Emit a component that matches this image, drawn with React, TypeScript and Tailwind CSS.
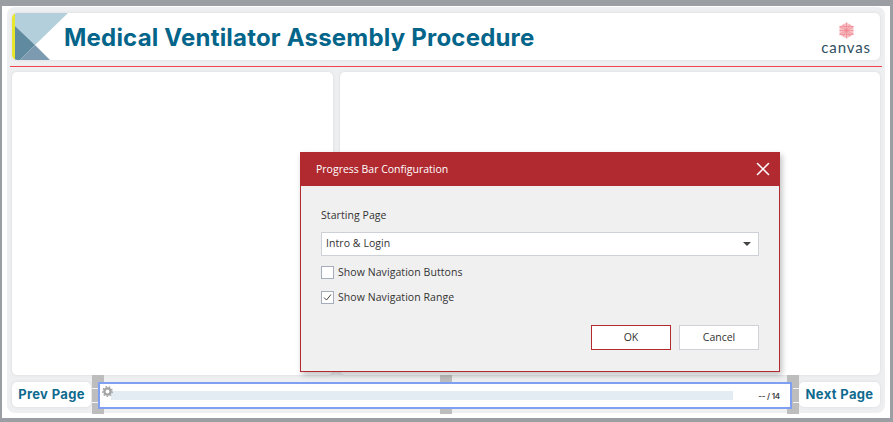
import { X } from "lucide-react";

function Logo() {
  return (
    <div className="flex flex-col items-center pr-[9px] pt-[9px]">
      <svg width="17" height="17" viewBox="0 0 17 17" className="ml-[1px]">
        <path d="M8.5 0.5 L15.5 4.5 V12.5 L8.5 16.5 L1.5 12.5 V4.5 Z" fill="#f7c0c5" />
        <path
          d="M8.5 0.5 V16.5 M1.5 4.5 L15.5 12.5 M15.5 4.5 L1.5 12.5 M5 2.5 L12 14.5 M12 2.5 L5 14.5 M1.5 8.5 H15.5 M1.5 4.5 H15.5 M1.5 12.5 H15.5"
          stroke="#ee7f8a"
          strokeWidth="0.6"
          fill="none"
        />
      </svg>
      <span className="mt-[1px] font-['Lato',sans-serif] text-[15px] leading-[15px] tracking-[0.9px] text-[#2f4f5f]">
        canvas
      </span>
    </div>
  );
}

function Banner() {
  return (
    <svg width="53" height="47" viewBox="0 0 53 47" className="absolute left-[3px] top-0">
      <path d="M0 0 H53 L20 32 L0 13 Z" fill="#b3cfdb" />
      <path d="M0 13 L20 32 L5 47 H0 Z" fill="#5f8aa0" />
      <path d="M20 32 L35 47 H5 Z" fill="#7d9bb0" />
    </svg>
  );
}

function Handle({ className }: { className: string }) {
  return <div className={`absolute bg-[#bdbdbd] ${className}`} />;
}

function Stub({ className }: { className: string }) {
  return <div className={`absolute h-[1px] w-[6px] bg-[#f4f4f5] ${className}`} />;
}

function NavButton({ label, width }: { label: string; width: string }) {
  return (
    <div
      className={`flex h-[25px] shrink-0 items-center justify-center rounded-[5px] bg-white text-[13px] font-bold tracking-[0.35px] text-[#0f6a8f] shadow-[0_0_3px_#d8d9dc] ${width}`}
    >
      {label}
    </div>
  );
}

function Check({ checked, label }: { checked?: boolean; label: string }) {
  return (
    <div className="flex h-[13px] items-center gap-[4px]">
      <div className="flex h-[13px] w-[13px] items-center justify-center border border-[#a5adbc] bg-white">
        {checked && (
          <svg width="9" height="9" viewBox="0 0 9 9">
            <path d="M1 4.5 L3.5 7 L8 1.5" stroke="#444444" strokeWidth="1" fill="none" />
          </svg>
        )}
      </div>
      <span className="tracking-[0.07px]">{label}</span>
    </div>
  );
}

function Dialog() {
  return (
    <div className="absolute left-[300px] top-[152px] z-10 flex h-[220px] w-[480px] flex-col border border-t-0 border-[#b02a30] bg-[#f0f0f0] font-['Open_Sans',sans-serif] shadow-[2px_3px_6px_rgba(0,0,0,0.25)]">
      <div className="flex h-[34px] shrink-0 items-center justify-between bg-[#b02a30] pl-[15px] pr-[5px] text-[10.5px] text-white">
        <span className="pt-[1px]">Progress Bar Configuration</span>
        <X size={22} strokeWidth={1.7} />
      </div>
      <div className="flex flex-1 flex-col px-[20px] pt-[22px] text-[10.5px] text-[#333333]">
        <div className="leading-[15px] tracking-[0.07px]">Starting Page</div>
        <div className="mt-[9px] flex h-[24px] items-center justify-between border border-[#ced0d8] bg-white pl-[4px] pr-[7px]">
          <span className="tracking-[0.07px]">Intro &amp; Login</span>
          <div className="h-0 w-0 border-x-[4px] border-t-[4px] border-x-transparent border-t-[#444444]" />
        </div>
        <div className="mt-[10px] flex flex-col gap-[12px]">
          <Check label="Show Navigation Buttons" />
          <Check checked label="Show Navigation Range" />
        </div>
        <div className="mt-[21px] flex justify-end gap-[8px]">
          <div className="flex h-[25px] w-[80px] items-center justify-center border border-[#b02a30] bg-white">OK</div>
          <div className="flex h-[25px] w-[80px] items-center justify-center border border-[#d0d1d8] bg-white">Cancel</div>
        </div>
      </div>
    </div>
  );
}

function ProgressBar() {
  return (
    <div className="relative mx-[7px] h-[27px] flex-1">
      <Handle className="-left-[6px] -top-[7px] h-[39px] w-[12px]" />
      <Handle className="-right-[7px] -top-[7px] h-[39px] w-[12px]" />
      <Handle className="left-[342px] -top-[7px] h-[7px] w-[12px]" />
      <Handle className="-bottom-[5px] left-[342px] h-[5px] w-[12px]" />
      <Stub className="-left-[6px] top-[6px]" />
      <Stub className="-left-[6px] top-[20px]" />
      <Stub className="-right-[7px] top-[6px]" />
      <Stub className="-right-[7px] top-[20px]" />
      <div className="relative flex h-full items-center border-2 border-[#7f9ff2] bg-white pl-[11px] pr-[10px]">
        <svg width="11" height="11" viewBox="0 0 12 12" className="absolute left-[2px] top-[2px]">
          <circle cx="6" cy="6" r="3.4" fill="none" stroke="#a3a3a3" strokeWidth="2.6" />
          <circle cx="6" cy="6" r="5.2" fill="none" stroke="#a3a3a3" strokeWidth="1.4" strokeDasharray="1.8 1.8" />
        </svg>
        <div className="h-[9px] flex-1 bg-[#e4ecf3]" />
        <span className="ml-[25px] text-[8px] font-semibold tracking-[-0.2px] text-[#444444]">-- / 14</span>
      </div>
    </div>
  );
}

export default function App() {
  return (
    <div className="relative h-[422px] w-[893px] bg-[#9b9ea2] pb-[4px] pl-[2px] pr-[3px] pt-[6px] font-['Inter',sans-serif]">
      <div className="h-full w-full bg-white pb-[5px] pl-[5px] pr-[5px] pt-[1px]">
        <div className="flex h-full w-full flex-col rounded-[8px] bg-[#eeeff1] px-[5px] pt-[6px]">
          <div className="relative flex h-[47px] shrink-0 items-start justify-between overflow-hidden rounded-[5px] bg-white shadow-[0_0_3px_#d8d9dc]">
            <div className="absolute inset-y-0 left-0 w-[3px] bg-[#e6e62e]" />
            <Banner />
            <h1 className="ml-[52px] mt-[10px] text-[24px] font-bold leading-[30px] tracking-[0.2px] text-[#04658a]">
              Medical Ventilator Assembly Procedure
            </h1>
            <Logo />
          </div>
          <div className="-mx-[2px] mt-[6px] h-[1px] shrink-0 bg-[#f0434e]" />
          <div className="mt-[5px] flex h-[303px] shrink-0 gap-[7px]">
            <div className="w-[321px] rounded-[5px] bg-white shadow-[0_0_3px_#d8d9dc]" />
            <div className="flex-1 rounded-[5px] bg-white shadow-[0_0_3px_#d8d9dc]" />
          </div>
          <div className="mt-[7px] flex items-start">
            <NavButton label="Prev Page" width="w-[79px]" />
            <ProgressBar />
            <NavButton label="Next Page" width="w-[81px]" />
          </div>
        </div>
      </div>
      <Dialog />
    </div>
  );
}
